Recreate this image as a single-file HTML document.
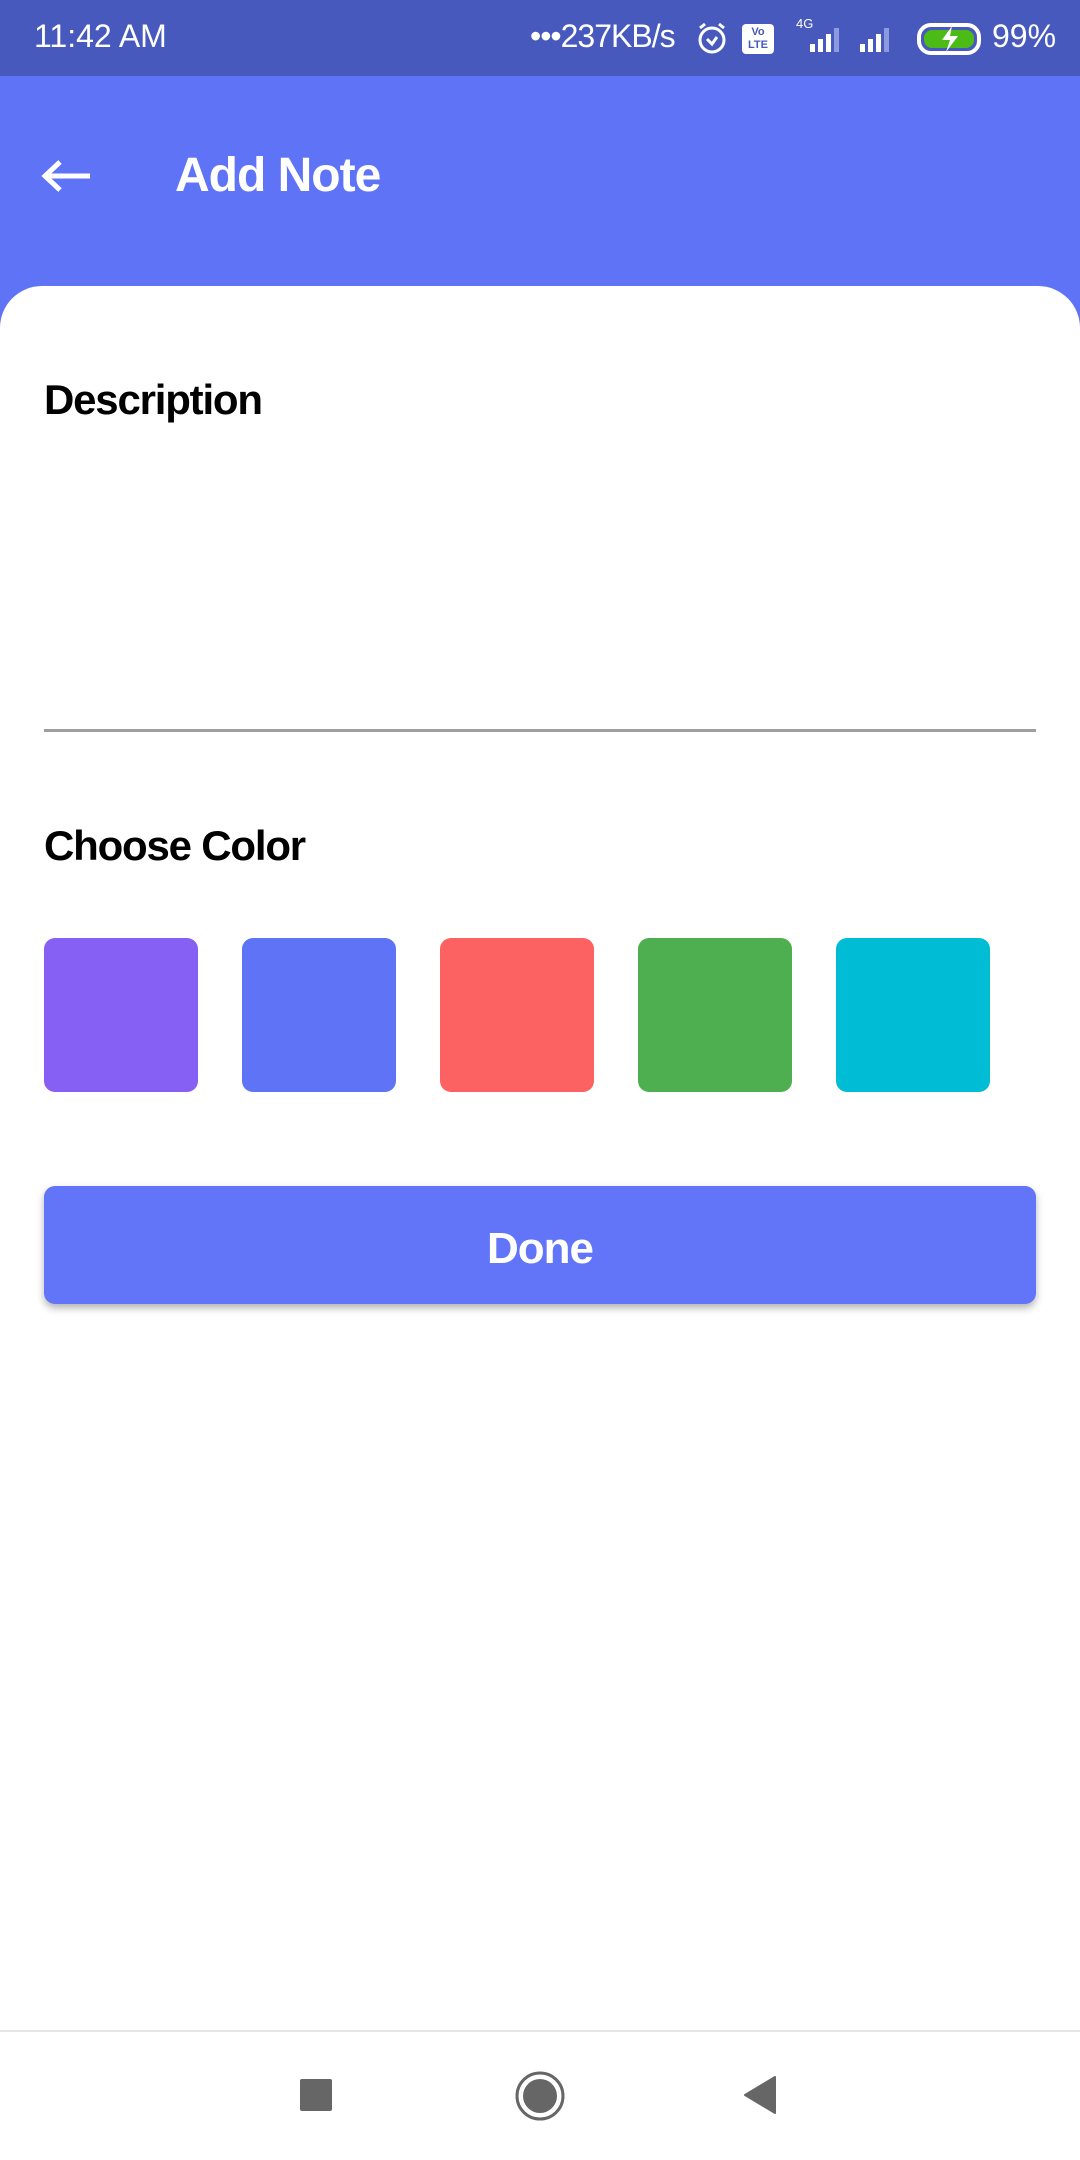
<!DOCTYPE html>
<html><head><meta charset="utf-8"><style>
*{margin:0;padding:0;box-sizing:border-box}
body{width:1080px;height:2160px;background:#fff;font-family:"Liberation Sans",sans-serif;position:relative;overflow:hidden}
.sb{position:absolute;left:0;top:0;width:1080px;height:76px;background:#4859BD;color:#fff;font-size:32px}
.hd{position:absolute;left:0;top:76px;width:1080px;height:260px;background:#5F73F7}
.card{position:absolute;left:0;top:286px;width:1080px;height:1874px;background:#fff;border-radius:42px 42px 0 0}
.t{position:absolute;font-weight:bold;color:#000}
.sw{position:absolute;top:938px;width:154px;height:154px;border-radius:11px}
</style></head><body>
<div class="sb">
<div style="position:absolute;left:34px;top:18px">11:42 AM</div>
<div style="position:absolute;left:530px;top:18px;letter-spacing:-1px">•••237KB/s</div>
<svg style="position:absolute;left:694px;top:20px" width="36" height="36" viewBox="0 0 36 36"><circle cx="18" cy="20" r="12" fill="none" stroke="#fff" stroke-width="3"/><path d="M13 19l5 5 5-7M6 8l5-4M30 8l-5-4" stroke="#fff" stroke-width="3" fill="none"/></svg>
<div style="position:absolute;left:742px;top:24px;width:32px;height:30px;background:#fff;border-radius:4px;color:#4859BD;font-size:11px;font-weight:bold;line-height:13px;text-align:center;padding-top:2px">Vo<br>LTE</div>
<div style="position:absolute;left:796px;top:16px;font-size:13px">4G</div>
<svg style="position:absolute;left:790px;top:24px" width="110" height="30" viewBox="0 0 110 30"><g fill="#fff"><rect x="20" y="20" width="5" height="8"/><rect x="28" y="15" width="5" height="13"/><rect x="36" y="10" width="5" height="18"/></g><rect x="44" y="4" width="5" height="24" fill="#8e9ae0"/><g fill="#fff"><rect x="70" y="20" width="5" height="8"/><rect x="78" y="15" width="5" height="13"/><rect x="86" y="10" width="5" height="18"/></g><rect x="94" y="4" width="5" height="24" fill="#8e9ae0"/></svg>
<svg style="position:absolute;left:916px;top:22px" width="70" height="34" viewBox="0 0 70 34"><rect x="3" y="3" width="60" height="28" rx="12" fill="none" stroke="#fff" stroke-width="4"/><rect x="8" y="8" width="50" height="18" rx="8" fill="#4CBB17"/><path d="M36 4l-10 14h8l-4 12 12-16h-8z" fill="#fff"/></svg>
<div style="position:absolute;left:992px;top:18px">99%</div>
</div>
<div class="hd"></div>
<svg style="position:absolute;left:40px;top:158px" width="54" height="36" viewBox="0 0 54 36"><path d="M50 18H6M20 4L5 18l15 14" stroke="#fff" stroke-width="5" fill="none"/></svg>
<div style="position:absolute;left:175px;top:148px;color:#fff;font-weight:bold;font-size:48px;letter-spacing:-1px">Add Note</div>
<div class="card"></div>
<div class="t" style="left:44px;top:376px;font-size:42px;letter-spacing:-1.2px">Description</div>
<div style="position:absolute;left:44px;top:729px;width:992px;height:3px;background:#9e9e9e"></div>
<div class="t" style="left:44px;top:822px;font-size:42px;letter-spacing:-1.2px">Choose Color</div>
<div class="sw" style="left:44px;background:#8660F5"></div>
<div class="sw" style="left:242px;background:#5F73F7"></div>
<div class="sw" style="left:440px;background:#FC6262"></div>
<div class="sw" style="left:638px;background:#4DAF50"></div>
<div class="sw" style="left:836px;background:#00BCD5"></div>
<div style="position:absolute;left:44px;top:1186px;width:992px;height:118px;background:#6275F9;border-radius:11px;box-shadow:0 4px 8px rgba(0,0,0,.3);color:#fff;font-weight:bold;font-size:44px;text-align:center;line-height:118px;letter-spacing:-1px;padding-top:4px">Done</div>
<div style="position:absolute;left:0;top:2030px;width:1080px;height:2px;background:#e6e6e6"></div>
<div style="position:absolute;left:300px;top:2079px;width:32px;height:32px;background:#666;border-radius:2px"></div>
<svg style="position:absolute;left:514px;top:2070px" width="52" height="52" viewBox="0 0 52 52"><circle cx="26" cy="26" r="23" fill="none" stroke="#666" stroke-width="3"/><circle cx="26" cy="26" r="17" fill="#666"/></svg>
<svg style="position:absolute;left:742px;top:2076px" width="36" height="38" viewBox="0 0 36 38"><path d="M33 1V37L3 19z" fill="#666" stroke="#666" stroke-linejoin="round" stroke-width="2"/></svg>
</body></html>
